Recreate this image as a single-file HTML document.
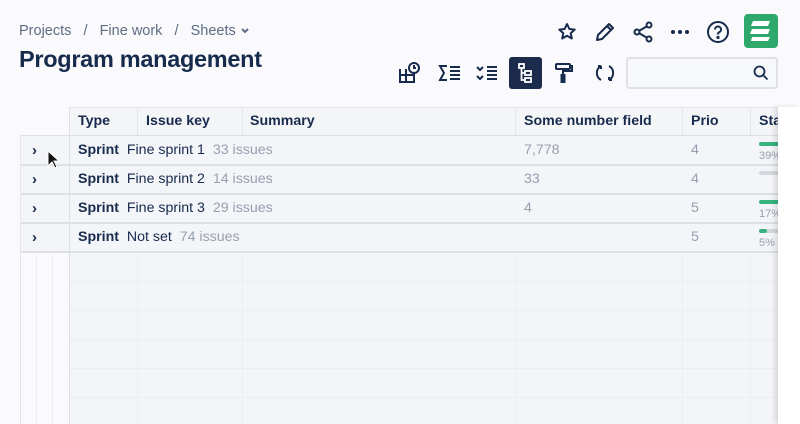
<!DOCTYPE html>
<html><head><style>
*{margin:0;padding:0;box-sizing:border-box}
body{width:800px;height:424px;overflow:hidden;background:#fafafc;font-family:"Liberation Sans",sans-serif;position:relative;color:#172b4d}
.a{position:absolute}
.bc{left:19px;top:23px;font-size:14.5px;color:#5e6c84}
.t{left:19px;top:46px;font-size:23.5px;font-weight:bold;color:#172b4d;letter-spacing:-0.3px}
.grid{left:20px;top:107px;width:758px;height:317px;overflow:hidden}
.hl{position:absolute;background:#e4e6ea}
.cell{position:absolute;font-size:14.2px;line-height:29px;white-space:nowrap}
.h{font-weight:bold;color:#172b4d}
.g{color:#97a0af}
.ch{position:absolute;left:12px;font-size:15px;font-weight:bold;line-height:29px}
</style></head><body>
<div class="a bc">Projects &nbsp;&nbsp;/&nbsp;&nbsp; Fine work &nbsp;&nbsp;/&nbsp;&nbsp; Sheets <svg width="10" height="8" viewBox="0 0 10 8" fill="none" stroke="#5e6c84" stroke-width="2"><path d="M2 2l3 3 3-3"/></svg></div>
<div class="a t">Program management</div>

<svg class="a" style="left:555px;top:20px" width="24" height="24" viewBox="0 0 24 24" fill="none" stroke="#172b4d" stroke-width="2" stroke-linejoin="round"><path d="M12 4l2.4 5 5.3.6-4 3.6 1.1 5.3L12 15.8 7.2 18.5l1.1-5.3-4-3.6 5.3-.6z"/></svg>
<svg class="a" style="left:593px;top:20px" width="24" height="24" viewBox="0 0 24 24" fill="none" stroke="#172b4d" stroke-width="2" stroke-linejoin="round"><path d="M16 4l4 4L9 19l-5 1 1-5z M14 6l4 4"/></svg>
<svg class="a" style="left:631px;top:20px" width="24" height="24" viewBox="0 0 24 24" fill="none" stroke="#172b4d" stroke-width="2"><circle cx="18" cy="5" r="2.5"/><circle cx="6" cy="12" r="2.5"/><circle cx="18" cy="19" r="2.5"/><path d="M8.2 10.8l7.6-4.4M8.2 13.2l7.6 4.4"/></svg>
<svg class="a" style="left:668px;top:20px" width="24" height="24" viewBox="0 0 24 24" fill="#172b4d"><circle cx="5" cy="12" r="2"/><circle cx="12" cy="12" r="2"/><circle cx="19" cy="12" r="2"/></svg>
<svg class="a" style="left:705px;top:19px" width="26" height="26" viewBox="0 0 26 26" fill="none" stroke="#172b4d" stroke-width="2"><circle cx="13" cy="13" r="10"/><path d="M10 10.5a3 3 0 1 1 4 2.8c-1 .4-1 1-1 2.2"/><circle cx="13" cy="18.5" r=".6" fill="#172b4d"/></svg>
<div class="a" style="left:744px;top:14px;width:34px;height:34px;background:#2ea96b;border-radius:4px"></div>
<svg class="a" style="left:744px;top:14px" width="34" height="34" viewBox="0 0 34 34" fill="#fff"><path d="M9 7h17l-2 5H7z M8 15h18l-2 5H6z M8 23h18l-2 4H7z"/></svg>

<svg class="a" style="left:397px;top:61px" width="26" height="24" viewBox="0 0 26 24" fill="none" stroke="#172b4d" stroke-width="2"><path d="M3 8v13h14V13M3 14h14M9 8v13"/><circle cx="17" cy="7" r="5"/><path d="M17 4v3h2"/></svg>
<svg class="a" style="left:438px;top:63px" width="24" height="20" viewBox="0 0 24 20" fill="none" stroke="#172b4d" stroke-width="2"><path d="M9 3H2l4 7-4 7h7M12 4h10M12 8h10M12 12h10M12 16h10"/></svg>
<svg class="a" style="left:475px;top:63px" width="24" height="20" viewBox="0 0 24 20" fill="none" stroke="#172b4d" stroke-width="2"><path d="M2 4l3 3 3-3M2 13l3 3 3-3M12 4h10M12 8h10M12 12h10M12 16h10"/></svg>
<div class="a" style="left:509px;top:57px;width:33px;height:32px;background:#1c2b4b;border-radius:3px"></div>
<svg class="a" style="left:509px;top:57px" width="33" height="32" viewBox="0 0 33 32" fill="none" stroke="#fff" stroke-width="1.8"><rect x="10" y="7" width="5" height="4"/><rect x="16" y="14" width="6" height="4"/><rect x="16" y="21" width="6" height="4"/><path d="M12.5 11v12h3.5M12.5 16h3.5"/></svg>
<svg class="a" style="left:552px;top:61px" width="24" height="24" viewBox="0 0 24 24" fill="none" stroke="#172b4d" stroke-width="2"><rect x="4" y="3" width="14" height="5" rx="1"/><path d="M18 5h2v5h-9v4"/><rect x="9.5" y="14" width="3" height="7" fill="#172b4d"/></svg>
<svg class="a" style="left:593px;top:61px" width="24" height="24" viewBox="0 0 24 24" fill="none" stroke="#172b4d" stroke-width="2"><path d="M8 5a8 8 0 0 0 0 14M16 19a8 8 0 0 0 0-14M8 5l-3 0M8 5v3M16 19h3M16 19v-3"/></svg>
<div class="a" style="left:626px;top:57px;width:152px;height:32px;background:#f7f8fa;border:2px solid #dfe1e6;border-radius:3px"></div>
<svg class="a" style="left:752px;top:64px" width="18" height="18" viewBox="0 0 18 18" fill="none" stroke="#172b4d" stroke-width="1.8"><circle cx="7.5" cy="7.5" r="5"/><path d="M11 11l4.5 4.5"/></svg>

<div class="a grid">
  <div style="position:absolute;left:49px;top:0;width:709px;height:28px;background:#f4f5f7"></div>
  <div style="position:absolute;left:0;top:28px;width:758px;height:117px;background:#f4f5f8"></div>
  <div style="position:absolute;left:49px;top:145px;width:709px;height:172px;background:#f4f5f8"></div>
  <div style="position:absolute;left:0;top:145px;width:49px;height:172px;background:#fafafc"></div>
  <div class="hl" style="left:49px;top:0;width:709px;height:1px"></div>
  <div class="hl" style="left:0;top:28px;width:758px;height:1px;background:#dcdfe4"></div>
  <div class="hl" style="left:0;top:57px;width:758px;height:2px;background:#dcdfe4"></div>
  <div class="hl" style="left:0;top:86px;width:758px;height:2px;background:#dcdfe4"></div>
  <div class="hl" style="left:0;top:115px;width:758px;height:2px;background:#dcdfe4"></div>
  <div class="hl" style="left:0;top:144px;width:758px;height:2px;background:#dcdfe4"></div>
  <div class="hl" style="left:49px;top:174px;width:709px;height:1px;background:#eceef1"></div>
  <div class="hl" style="left:49px;top:203px;width:709px;height:1px;background:#eceef1"></div>
  <div class="hl" style="left:49px;top:232px;width:709px;height:1px;background:#eceef1"></div>
  <div class="hl" style="left:49px;top:261px;width:709px;height:1px;background:#eceef1"></div>
  <div class="hl" style="left:49px;top:290px;width:709px;height:1px;background:#eceef1"></div>
  <div class="hl" style="left:0;top:28px;width:1px;height:289px"></div>
  <div class="hl" style="left:49px;top:0;width:1px;height:317px;background:#dcdfe4"></div>
  <div class="hl" style="left:16px;top:145px;width:1px;height:172px;background:#eceef1"></div>
  <div class="hl" style="left:32px;top:145px;width:1px;height:172px;background:#eceef1"></div>
  <div class="hl" style="left:117px;top:0;width:1px;height:28px"></div>
  <div class="hl" style="left:222px;top:0;width:1px;height:28px"></div>
  <div class="hl" style="left:495px;top:0;width:1px;height:28px"></div>
  <div class="hl" style="left:662px;top:0;width:1px;height:28px"></div>
  <div class="hl" style="left:730px;top:0;width:1px;height:28px"></div>
  <div class="hl" style="left:117px;top:145px;width:1px;height:172px;background:#eceef1"></div>
  <div class="hl" style="left:222px;top:145px;width:1px;height:172px;background:#eceef1"></div>
  <div class="hl" style="left:495px;top:145px;width:1px;height:172px;background:#eceef1"></div>
  <div class="hl" style="left:662px;top:145px;width:1px;height:172px;background:#eceef1"></div>
  <div class="hl" style="left:730px;top:145px;width:1px;height:172px;background:#eceef1"></div>
  <div class="cell h" style="left:58px;top:0">Type</div>
  <div class="cell h" style="left:126px;top:0">Issue key</div>
  <div class="cell h" style="left:230px;top:0">Summary</div>
  <div class="cell h" style="left:504px;top:0">Some number field</div>
  <div class="cell h" style="left:671px;top:0">Prio</div>
  <div class="cell h" style="left:739px;top:0">Status</div>
  <div class="ch" style="top:29px">&#8250;</div>
  <div class="ch" style="top:58px">&#8250;</div>
  <div class="ch" style="top:87px">&#8250;</div>
  <div class="ch" style="top:116px">&#8250;</div>
  <div class="cell" style="left:58px;top:29px"><b>Sprint</b>&nbsp; Fine sprint 1&nbsp; <span class="g">33 issues</span></div>
  <div class="cell" style="left:58px;top:58px"><b>Sprint</b>&nbsp; Fine sprint 2&nbsp; <span class="g">14 issues</span></div>
  <div class="cell" style="left:58px;top:87px"><b>Sprint</b>&nbsp; Fine sprint 3&nbsp; <span class="g">29 issues</span></div>
  <div class="cell" style="left:58px;top:116px"><b>Sprint</b>&nbsp; Not set&nbsp; <span class="g">74 issues</span></div>
  <div class="cell g" style="left:504px;top:29px">7,778</div>
  <div class="cell g" style="left:504px;top:58px">33</div>
  <div class="cell g" style="left:504px;top:87px">4</div>
  <div class="cell g" style="left:671px;top:29px">4</div>
  <div class="cell g" style="left:671px;top:58px">4</div>
  <div class="cell g" style="left:671px;top:87px">5</div>
  <div class="cell g" style="left:671px;top:116px">5</div>
  <div style="position:absolute;left:739px;top:35px;width:30px;height:4px;background:#36b37e;border-radius:2px"></div>
  <div class="cell g" style="left:739px;top:43px;font-size:11px;line-height:13px">39%</div>
  <div style="position:absolute;left:739px;top:64px;width:30px;height:4px;background:#d4d7dd;border-radius:2px"></div>
  <div style="position:absolute;left:739px;top:93px;width:30px;height:4px;background:#36b37e;border-radius:2px"></div>
  <div class="cell g" style="left:739px;top:101px;font-size:11px;line-height:13px">17%</div>
  <div style="position:absolute;left:739px;top:122px;width:30px;height:4px;background:#d4d7dd;border-radius:2px"></div>
  <div style="position:absolute;left:739px;top:122px;width:8px;height:4px;background:#36b37e;border-radius:2px"></div>
  <div class="cell g" style="left:739px;top:130px;font-size:11px;line-height:13px">5%</div>
</div>
<div class="a" style="left:778px;top:107px;width:22px;height:317px;background:#fff;box-shadow:-3px 0 5px rgba(0,0,0,0.12)"></div>
<svg class="a" style="left:47px;top:150px" width="14" height="20" viewBox="0 0 14 20"><path d="M1 1v15l4-4 3 6 2-1-3-6h5z" fill="#111" stroke="#fff" stroke-width="1"/></svg>
</body></html>
